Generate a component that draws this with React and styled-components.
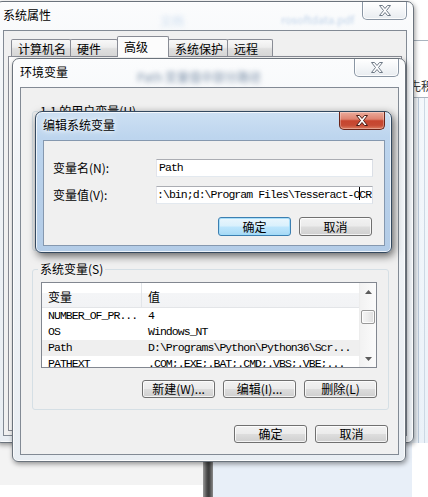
import React from "react";
import styled, { createGlobalStyle } from "styled-components";

const CJK = `"Noto Sans CJK SC", "Noto Sans", sans-serif`;
const MONO = `"Liberation Mono", "DejaVu Sans Mono", "Noto Sans CJK SC", monospace`;

const GlobalStyle = createGlobalStyle`
  html, body { margin: 0; padding: 0; background: #ffffff; overflow: hidden; }
  body { font-family: ${CJK}; font-size: 12px; color: #000; }
  * { box-sizing: border-box; }
`;

const Desktop = styled.div`
  position: relative;
  width: 428px;
  height: 497px;
  overflow: hidden;
  background: #ffffff;
`;

/* ---------- background scenery (other windows on the desktop) ---------- */
const SideDoc = styled.div`
  position: absolute;
  left: 397px;
  top: 40px;
  width: 40px;
  height: 58px;
  padding-top: 38px;
  background: #ffffff;
  border-top: 1px solid #aab4bf;
  border-bottom: 1px solid #aab4bf;
  font-size: 12px;
  line-height: 14px;
  color: #3a3a3a;
  white-space: nowrap;
  overflow: hidden;
`;

const SideGlass = styled.div`
  position: absolute;
  left: 400px;
  top: 98px;
  width: 28px;
  height: 345px;
  background:
    linear-gradient(90deg, transparent 18px, #bccbdb 18px, #bccbdb 19px, transparent 19px,
      transparent 24px, #ccd8e4 24px, #ccd8e4 25px, transparent 25px),
    linear-gradient(180deg, #f4f8fc, #eaf1f8);
`;

const ShelfLeft = styled.div`
  position: absolute;
  left: 0;
  top: 440px;
  width: 203px;
  height: 45px;
  background: #f3f3f3;
`;

const ShelfPost = styled.div`
  position: absolute;
  left: 203px;
  top: 452px;
  width: 10px;
  height: 45px;
  background: linear-gradient(90deg, #9a9a9a, #4a4a4a 40%, #3c3c3c 60%, #8a8a8a);
`;

const ShelfRight = styled.div`
  position: absolute;
  left: 213px;
  top: 440px;
  width: 199px;
  height: 57px;
  background: #e8eff8;
`;

/* ---------- window chrome ---------- */
const Window = styled.div`
  position: absolute;
  left: ${(p) => p.$x}px;
  top: ${(p) => p.$y}px;
  width: ${(p) => p.$w}px;
  height: ${(p) => p.$h}px;
  display: flex;
  flex-direction: column;
  padding: 0 6px 6px 7px;
  border: 1px solid ${(p) => (p.$active ? "#34495f" : "#6b737c")};
  border-radius: 7px 7px 6px 6px;
  background: ${(p) =>
    p.$active
      ? "linear-gradient(180deg, #cde0f3 0%, #bdd5ee 18%, #b7cfe9 60%, #b3cce7 100%)"
      : "linear-gradient(180deg, #fbfcfd 0%, #f1f4f7 25%, #e9eef3 100%)"};
  box-shadow: inset 0 0 0 1px rgba(255, 255, 255, 0.75),
    ${(p) => (p.$active ? "2px 3px 9px rgba(0,0,0,0.6)" : "1px 2px 5px rgba(0,0,0,0.4)")};
`;

const TitleBar = styled.div`
  display: flex;
  align-items: flex-start;
  height: 28px;
  flex-shrink: 0;
  min-width: 0;
`;

const TitleText = styled.div`
  padding-top: 5px;
  line-height: 16px;
  font-size: 12px;
  white-space: nowrap;
  color: #000;
  text-shadow: 0 0 4px #fff, 0 0 8px #fff;
`;

const GlassBlur = styled.span`
  margin-left: ${(p) => p.$gap}px;
  margin-top: ${(p) => p.$top}px;
  font-size: ${(p) => p.$size || 12}px;
  line-height: 14px;
  color: ${(p) => p.$color};
  filter: blur(${(p) => p.$blur || 1.6}px);
  opacity: ${(p) => p.$alpha || 1};
  white-space: nowrap;
`;

const CloseButton = styled.div`
  flex-shrink: 0;
  margin-left: auto;
  width: ${(p) => p.$w}px;
  height: 18px;
  display: flex;
  align-items: center;
  justify-content: center;
  border: 1px solid ${(p) => (p.$active ? "#6a2418" : "#8a96a4")};
  border-top: none;
  border-radius: 0 0 5px 5px;
  background: ${(p) =>
    p.$active
      ? "linear-gradient(180deg, #ebab9b 0%, #de8370 42%, #c7452e 52%, #c64b34 78%, #dd7d60 100%)"
      : "linear-gradient(180deg, #ffffff 0%, #f4f6f8 50%, #e8ecf0 100%)"};
  box-shadow: inset 0 0 0 1px rgba(255, 255, 255, ${(p) => (p.$active ? 0.3 : 0.85)});
`;

const XGlyph = ({ active }) => (
  <svg width="14" height="11" viewBox="0 0 14 11">
    <path
      d="M1.5 0.5h3l2.5 3 2.5-3h3l-4 5 4 5h-3l-2.5-3-2.5 3h-3l4-5z"
      fill="#ffffff"
      stroke={active ? "#4a1a12" : "#6f7a87"}
      strokeWidth="1"
      strokeLinejoin="round"
    />
  </svg>
);

const Client = styled.div`
  flex: 1;
  min-height: 0;
  display: flex;
  flex-direction: column;
  border: 1px solid ${(p) => (p.$active ? "#8598af" : "#828a94")};
  background: #f0f0f0;
  overflow: hidden;
`;

/* ---------- system properties (tabs) ---------- */
const TabArea = styled.div`
  flex: 1;
  display: flex;
  flex-direction: column;
  padding: 5px 4px 4px 4px;
`;

const TabStrip = styled.div`
  display: flex;
  align-items: flex-end;
  height: 21px;
  padding-left: 3px;
  margin-bottom: -1px;
  position: relative;
  z-index: 1;
`;

const Tab = styled.div`
  flex-shrink: 0;
  width: ${(p) => p.$w}px;
  height: ${(p) => (p.$active ? 21 : 17)}px;
  margin-left: -1px;
  margin-bottom: ${(p) => (p.$active ? 0 : 1)}px;
  &:first-child { margin-left: 0; }
  padding: ${(p) => (p.$active ? 2 : 1)}px 0 0 6px;
  line-height: 16px;
  font-size: 12px;
  white-space: nowrap;
  border: 1px solid #898c95;
  border-bottom: none;
  border-radius: 2px 2px 0 0;
  background: ${(p) =>
    p.$active
      ? "#fcfcfc"
      : "linear-gradient(180deg, #f8f8f8 0%, #ededed 45%, #dfdfdf 55%, #d6d6d6 100%)"};
  position: relative;
  z-index: ${(p) => (p.$active ? 2 : 1)};
`;

const TabPanel = styled.div`
  flex: 1;
  border: 1px solid #898c95;
  background: #fcfcfc;
`;

/* ---------- environment variables ---------- */
const EnvBody = styled.div`
  flex: 1;
  display: flex;
  flex-direction: column;
  padding: 16px 9px 0 11px;
`;

const Group = styled.fieldset`
  margin: ${(p) => p.$mt || 0}px 0 0 0;
  min-width: 0;
  padding: 6px 11px 11px 8px;
  border: 1px solid #d5dfe5;
  border-radius: 3px;
  ${(p) => (p.$h ? `height: ${p.$h}px; overflow: hidden;` : "")}
`;

const Legend = styled.legend`
  padding: 0 2px;
  margin-left: -3px;
  font-size: 12px;
  line-height: 14px;
  white-space: nowrap;
`;

const ListView = styled.div`
  display: flex;
  height: 86px;
  border: 1px solid #828790;
  background: #ffffff;
  overflow: hidden;
`;

const ListMain = styled.div`
  flex: 1;
  min-width: 0;
  display: flex;
  flex-direction: column;
`;

const ListHeader = styled.div`
  display: grid;
  grid-template-columns: 100px 1fr;
  height: 25px;
  flex-shrink: 0;
  border-bottom: 1px solid #e3e5e8;
  background: linear-gradient(180deg, #ffffff 0%, #ffffff 42%, #f4f5f7 43%, #f2f3f5 100%);
`;

const HeaderCell = styled.div`
  display: flex;
  align-items: center;
  padding: 3px 0 0 6px;
  font-size: 12px;
  border-right: ${(p) => (p.$divider ? "1px solid #e2e5e9" : "none")};
`;

const Row = styled.div`
  display: grid;
  grid-template-columns: 100px 1fr;
  height: 16px;
  flex-shrink: 0;
  align-items: center;
  background: ${(p) => (p.$selected ? "#efefef" : "transparent")};
`;

const Cell = styled.div`
  padding-left: 6px;
  font-family: ${MONO};
  font-size: 11.5px;
  letter-spacing: -0.95px;
  line-height: 16px;
  white-space: nowrap;
  overflow: hidden;
`;

const ScrollBar = styled.div`
  width: 17px;
  flex-shrink: 0;
  display: flex;
  flex-direction: column;
  background: linear-gradient(90deg, #f2f2f2, #fbfbfb);
  border-left: 1px solid #ededed;
`;

const ScrollArrow = styled.div`
  height: 17px;
  flex-shrink: 0;
  display: flex;
  align-items: center;
  justify-content: center;
  margin-top: ${(p) => (p.$down ? "auto" : "0")};
`;

const ScrollThumb = styled.div`
  height: 14px;
  margin: 10px 1px 0 1px;
  border: 1px solid #999999;
  border-radius: 2px;
  background: linear-gradient(90deg, #f5f5f5 0%, #ececec 50%, #dedede 100%);
  box-shadow: inset 0 0 0 1px rgba(255, 255, 255, 0.8);
`;

const Arrow = ({ down }) => (
  <svg width="7" height="4" viewBox="0 0 7 4">
    <path d={down ? "M0 0h7L3.5 4z" : "M0 4h7L3.5 0z"} fill="#5b5b5b" />
  </svg>
);

const ButtonRow = styled.div`
  display: flex;
  justify-content: flex-end;
  gap: 8px;
  margin-top: ${(p) => p.$mt || 0}px;
  margin-right: ${(p) => p.$mr || 0}px;
`;

const Button = styled.button`
  width: ${(p) => p.$w || 73}px;
  height: ${(p) => p.$h || 18}px;
  padding: 0;
  font-family: ${CJK};
  font-size: 12px;
  line-height: 14px;
  color: #000;
  border: 1px solid ${(p) => (p.$default ? "#3c7fb1" : "#707070")};
  border-radius: 3px;
  background: ${(p) =>
    p.$default
      ? "linear-gradient(180deg, #eaf6fd 0%, #d9f0fc 48%, #bee6fd 52%, #a7d9f5 100%)"
      : "linear-gradient(180deg, #f2f2f2 0%, #ebebeb 48%, #dddddd 52%, #cfcfcf 100%)"};
  box-shadow: inset 0 0 0 1px ${(p) => (p.$default ? "rgba(160,220,250,0.9)" : "rgba(255,255,255,0.75)")};
`;

/* ---------- edit dialog ---------- */
const EditForm = styled.div`
  display: grid;
  grid-template-columns: 103px 217px;
  row-gap: 9px;
  align-items: center;
  padding: 18px 0 0 9px;
`;

const FieldLabel = styled.div`
  font-size: 12px;
  line-height: 16px;
  white-space: nowrap;
`;

const TextBox = styled.div`
  height: 18px;
  padding: 0 ${(p) => (p.$scrolled ? 0 : 2)}px;
  border: 1px solid;
  border-color: #abadb3 #dbdfe6 #e3e9ef #e2e3ea;
  background: #ffffff;
  font-family: ${MONO};
  font-size: 11.5px;
  letter-spacing: -0.95px;
  line-height: 16px;
  white-space: nowrap;
  overflow: hidden;
`;

const Caret = styled.span`
  display: inline-block;
  width: 1px;
  height: 13px;
  margin-right: -1px;
  background: #000;
  vertical-align: -2px;
`;

const FormButtons = styled.div`
  grid-column: 1 / -1;
  display: flex;
  justify-content: flex-end;
  gap: 8px;
  margin-top: 4px;
  margin-right: 1px;
`;

const tabs = [
  { label: "计算机名", w: 60 },
  { label: "硬件", w: 48 },
  { label: "高级", w: 52, active: true },
  { label: "系统保护", w: 60 },
  { label: "远程", w: 46 },
];

const sysVars = [
  { name: "NUMBER_OF_PR...", value: "4" },
  { name: "OS", value: "Windows_NT" },
  { name: "Path", value: "D:\\Programs\\Python\\Python36\\Scr...", selected: true },
  { name: "PATHEXT", value: ".COM;.EXE;.BAT;.CMD;.VBS;.VBE;..." },
];

export default function App() {
  return (
    <>
      <GlobalStyle />
      <Desktop>
        <SideDoc>优先积分</SideDoc>
        <SideGlass />
        <ShelfLeft />
        <ShelfPost />
        <ShelfRight />

        {/* 系统属性 */}
        <Window $x={-5} $y={1} $w={419} $h={442}>
          <TitleBar>
            <TitleText>系统属性</TitleText>
            <GlassBlur $gap={109} $top={12} $color="#b7cfe9" $blur={2.4} $alpha={0.7}>文档</GlassBlur>
            <GlassBlur $gap={97} $top={10} $size={11} $color="#a9c3e2" $blur={1.8} $alpha={0.7}>rosoftdata.pdf</GlassBlur>
            <CloseButton $w={45}>
              <XGlyph />
            </CloseButton>
          </TitleBar>
          <Client>
            <TabArea>
              <TabStrip>
                {tabs.map((t) => (
                  <Tab key={t.label} $w={t.w} $active={t.active}>
                    {t.label}
                  </Tab>
                ))}
              </TabStrip>
              <TabPanel />
            </TabArea>
          </Client>
        </Window>

        {/* 环境变量 */}
        <Window $x={12} $y={58} $w={394} $h={404}>
          <TitleBar>
            <TitleText>环境变量</TitleText>
            <GlassBlur $gap={69} $top={11} $color="#7f93ab" $blur={2.4}>Path 变量值中部分路径</GlassBlur>
            <CloseButton $w={45}>
              <XGlyph />
            </CloseButton>
          </TitleBar>
          <Client>
            <EnvBody>
              <Group $h={147}>
                <Legend>1.1 的用户变量(U)</Legend>
                <ListView />
              </Group>
              <Group $mt={11}>
                <Legend>系统变量(S)</Legend>
                <ListView>
                  <ListMain>
                    <ListHeader>
                      <HeaderCell $divider>变量</HeaderCell>
                      <HeaderCell>值</HeaderCell>
                    </ListHeader>
                    {sysVars.map((v) => (
                      <Row key={v.name} $selected={v.selected}>
                        <Cell>{v.name}</Cell>
                        <Cell>{v.value}</Cell>
                      </Row>
                    ))}
                  </ListMain>
                  <ScrollBar>
                    <ScrollArrow>
                      <Arrow />
                    </ScrollArrow>
                    <ScrollThumb />
                    <ScrollArrow $down>
                      <Arrow down />
                    </ScrollArrow>
                  </ScrollBar>
                </ListView>
                <ButtonRow $mt={12}>
                  <Button>新建(W)...</Button>
                  <Button>编辑(I)...</Button>
                  <Button>删除(L)</Button>
                </ButtonRow>
              </Group>
              <ButtonRow $mt={15} $mr={1}>
                <Button>确定</Button>
                <Button>取消</Button>
              </ButtonRow>
            </EnvBody>
          </Client>
        </Window>

        {/* 编辑系统变量 */}
        <Window $x={35} $y={111} $w={357} $h={142} $active>
          <TitleBar>
            <TitleText>编辑系统变量</TitleText>
            <CloseButton $w={46} $active>
              <XGlyph active />
            </CloseButton>
          </TitleBar>
          <Client $active>
            <EditForm>
              <FieldLabel>变量名(N):</FieldLabel>
              <TextBox>Path</TextBox>
              <FieldLabel>变量值(V):</FieldLabel>
              <TextBox $scrolled>
                :\bin;d:\Program Files\Tesseract-O
                <Caret />
                CR
              </TextBox>
              <FormButtons>
                <Button $h={19} $default>确定</Button>
                <Button $h={19}>取消</Button>
              </FormButtons>
            </EditForm>
          </Client>
        </Window>
      </Desktop>
    </>
  );
}
